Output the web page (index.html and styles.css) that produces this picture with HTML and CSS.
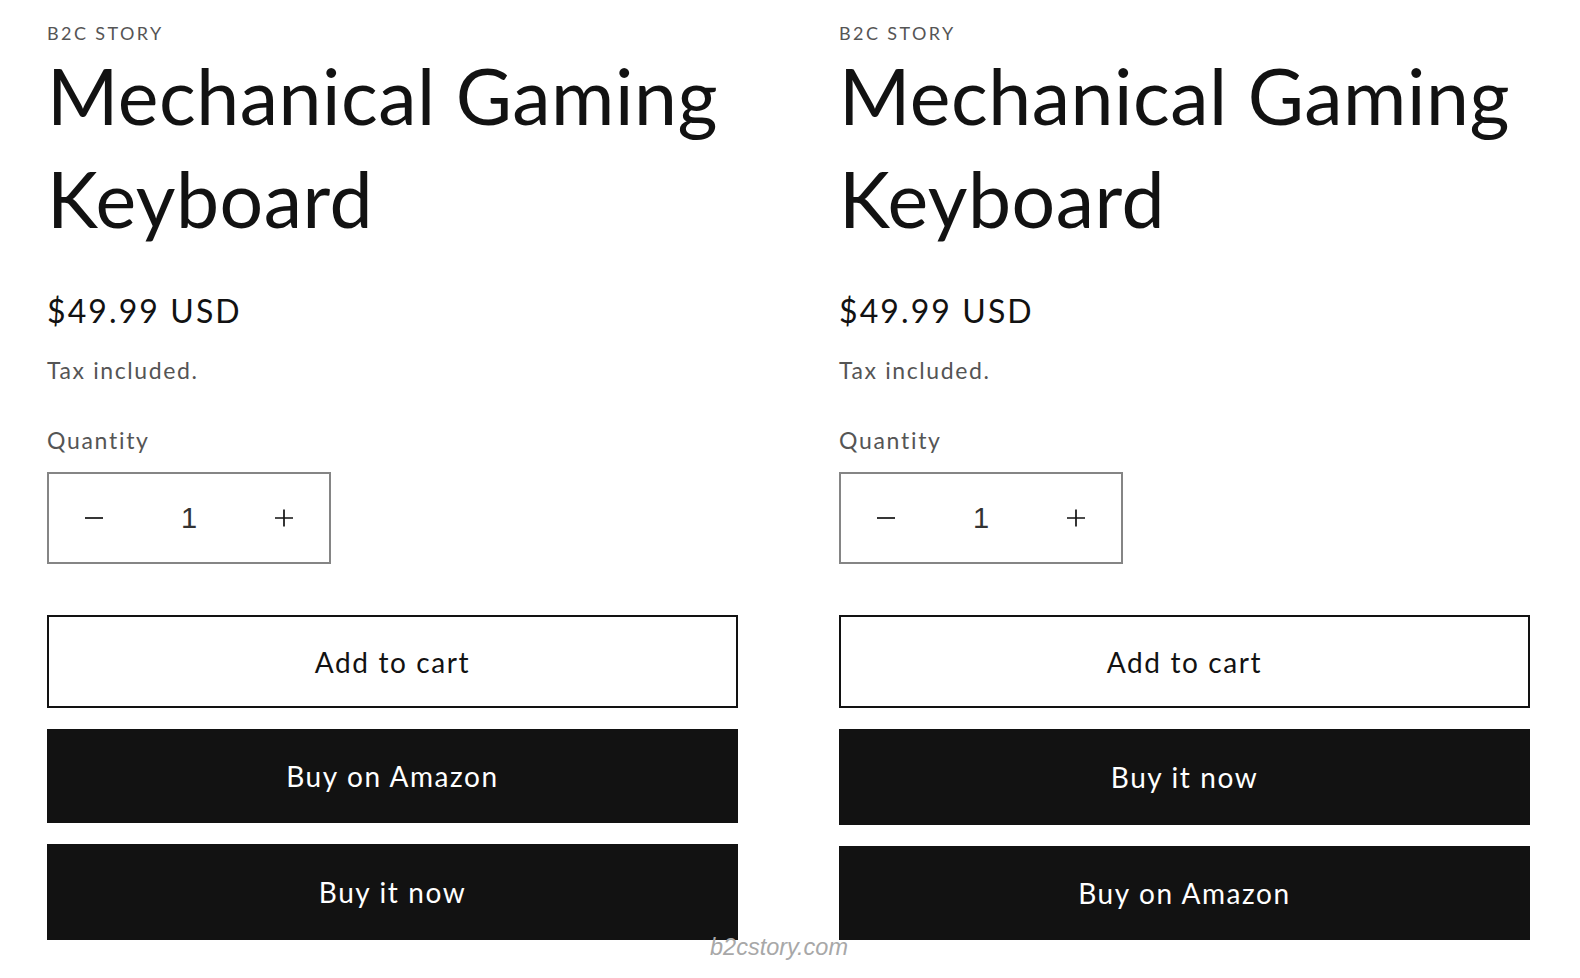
FILE: index.html
```html
<!DOCTYPE html>
<html lang="en">
<head>
<meta charset="utf-8">
<title>Mechanical Gaming Keyboard</title>
<link rel="stylesheet" href="styles.css">
</head>
<body>
<main class="page">
  <section class="product">
    <p class="vendor">B2C STORY</p>
    <h1 class="title">Mechanical Gaming Keyboard</h1>
    <p class="price">$49.99 USD</p>
    <p class="tax">Tax included.</p>
    <p class="qty-label">Quantity</p>
    <div class="qty">
      <button class="qty-btn" type="button" aria-label="Decrease quantity">
        <svg viewBox="0 0 20 20" width="20" height="20"><path d="M1 10h18" stroke="#121212" stroke-width="1.7" fill="none"/></svg>
      </button>
      <span class="qty-value">1</span>
      <button class="qty-btn" type="button" aria-label="Increase quantity">
        <svg viewBox="0 0 20 20" width="20" height="20"><path d="M1 10h18M10 1.5v17" stroke="#121212" stroke-width="1.7" fill="none"/></svg>
      </button>
    </div>
    <div class="actions">
      <button class="btn btn-outline" type="button">Add to cart</button>
      <button class="btn btn-solid" type="button">Buy on Amazon</button>
      <button class="btn btn-solid btn-tall" type="button">Buy it now</button>
    </div>
  </section>
  <section class="product">
    <p class="vendor">B2C STORY</p>
    <h1 class="title">Mechanical Gaming Keyboard</h1>
    <p class="price">$49.99 USD</p>
    <p class="tax">Tax included.</p>
    <p class="qty-label">Quantity</p>
    <div class="qty">
      <button class="qty-btn" type="button" aria-label="Decrease quantity">
        <svg viewBox="0 0 20 20" width="20" height="20"><path d="M1 10h18" stroke="#121212" stroke-width="1.7" fill="none"/></svg>
      </button>
      <span class="qty-value">1</span>
      <button class="qty-btn" type="button" aria-label="Increase quantity">
        <svg viewBox="0 0 20 20" width="20" height="20"><path d="M1 10h18M10 1.5v17" stroke="#121212" stroke-width="1.7" fill="none"/></svg>
      </button>
    </div>
    <div class="actions">
      <button class="btn btn-outline" type="button">Add to cart</button>
      <button class="btn btn-solid btn-tall" type="button">Buy it now</button>
      <button class="btn btn-solid" type="button">Buy on Amazon</button>
    </div>
  </section>
</main>
<div class="watermark">b2cstory.com</div>
</body>
</html>
```
FILE: styles.css
```css
* { box-sizing: border-box; }

html, body {
  margin: 0;
  padding: 0;
  background: #ffffff;
}

body {
  font-family: Lato, "Noto Sans", sans-serif;
  color: #121212;
  position: relative;
  min-height: 978px;
}

.page {
  display: grid;
  grid-template-columns: 691px 691px;
  column-gap: 101px;
  padding: 22px 0 0 47px;
}

.product {
  display: flex;
  flex-direction: column;
  align-items: flex-start;
}

.product p, .product h1 { margin: 0; }

.vendor {
  font-size: 18px;
  line-height: 22px;
  letter-spacing: 2.4px;
  color: #555555;
}

.title {
  font-weight: 400;
  font-size: 77px;
  line-height: 103px;
  letter-spacing: 0.5px;
  color: #121212;
}

.price {
  margin-top: 41px !important;
  font-size: 32px;
  line-height: 40px;
  letter-spacing: 2.1px;
  color: #121212;
}

.tax {
  margin-top: 24px !important;
  font-size: 23px;
  line-height: 30px;
  letter-spacing: 1.6px;
  color: #555555;
}

.qty-label {
  margin-top: 40px !important;
  font-size: 23px;
  line-height: 30px;
  letter-spacing: 1.7px;
  color: #555555;
}

.qty {
  margin-top: 17px;
  width: 284px;
  height: 92px;
  border: 2px solid #858585;
  display: flex;
  align-items: stretch;
}

.qty-btn {
  width: 90px;
  flex: 0 0 90px;
  border: 0;
  padding: 0;
  background: transparent;
  display: flex;
  align-items: center;
  justify-content: center;
}

.qty-btn svg { display: block; }

.qty-value {
  flex: 1 1 auto;
  display: flex;
  align-items: center;
  justify-content: center;
  font-family: "Liberation Sans", Arial, sans-serif;
  font-size: 29px;
  color: #333333;
}

.actions {
  margin-top: 51px;
  width: 100%;
  display: flex;
  flex-direction: column;
  gap: 21px;
}

.btn {
  width: 100%;
  height: 93px;
  display: flex;
  align-items: center;
  justify-content: center;
  font-family: Lato, "Noto Sans", sans-serif;
  font-size: 28px;
  letter-spacing: 1.6px;
  padding: 0;
  margin: 0;
  border-radius: 0;
}

.btn-outline {
  background: #ffffff;
  color: #121212;
  border: 2px solid #121212;
}

.btn-solid {
  background: #121212;
  color: #ffffff;
  border: 0;
  height: 94px;
}

.btn-tall { height: 96px; }

.watermark {
  position: absolute;
  left: 710px;
  top: 936px;
  font-family: "Liberation Sans", Arial, sans-serif;
  font-style: italic;
  font-size: 23.5px;
  line-height: 23px;
  color: #a8a8a8;
}
```
